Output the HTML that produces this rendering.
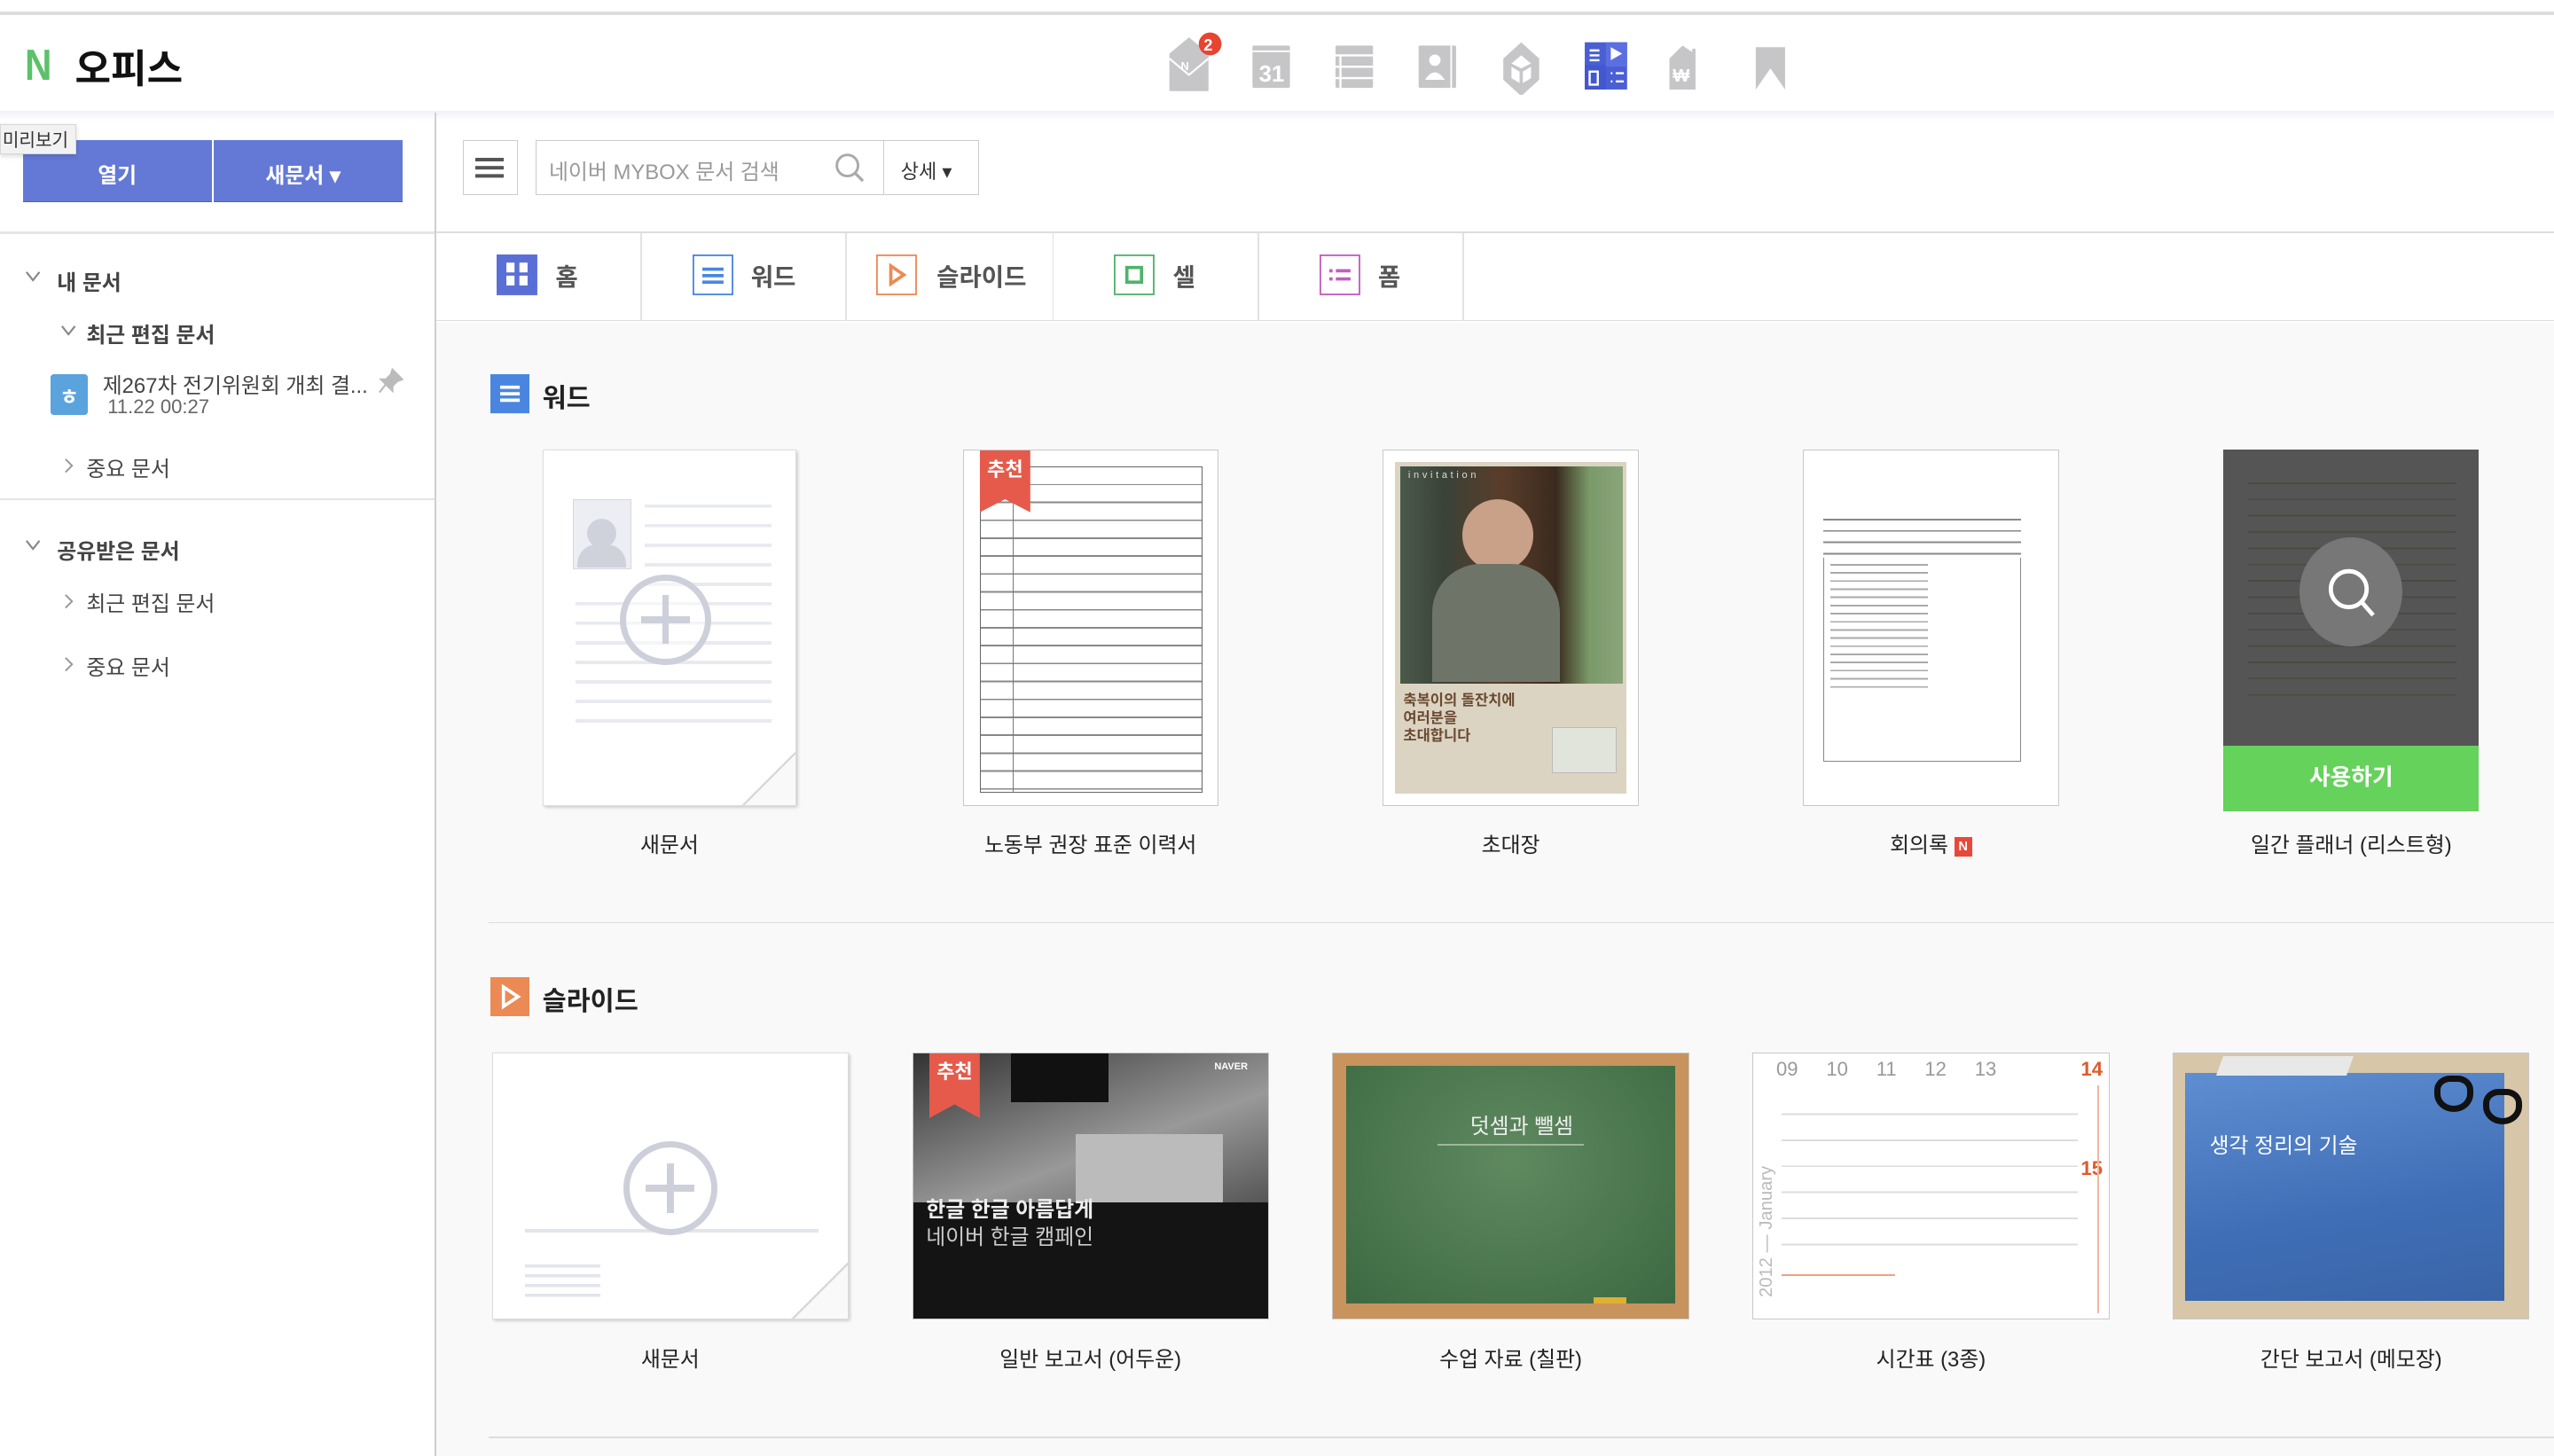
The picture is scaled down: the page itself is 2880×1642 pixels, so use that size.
<!DOCTYPE html>
<html><head><meta charset="utf-8">
<style>
*{margin:0;padding:0;box-sizing:border-box}
html,body{width:2880px;height:1642px;overflow:hidden;background:#fff}
#r{position:absolute;left:0;top:0;width:1568px;height:894px;zoom:1.83673;font-family:"Liberation Sans","Noto Sans CJK KR",sans-serif;color:#333;background:#fff;overflow:hidden}
.a{position:absolute}
.t{position:absolute;white-space:nowrap}
.card{position:absolute;background:#fff;border:1px solid #c8c8c8;overflow:hidden}
.lbl{position:absolute;font-size:13px;color:#222;text-align:center;white-space:nowrap}
.badge{position:absolute;background:#e55a4b;color:#fff;font-size:12px;font-weight:bold;text-align:center;padding-top:4px}
.chev{position:absolute;font-size:10px;color:#888}
</style></head><body><div id="r">
<div class="a" style="left:0;top:7px;width:1568px;height:2px;background:#ddd"></div>
<div class="a" style="left:0;top:68px;width:1568px;height:6px;background:linear-gradient(#eef0f4,#fff)"></div>
<div class="t" style="left:15px;top:24px;font-size:27px;font-weight:bold;color:#5cc16a;transform:scaleX(.85);transform-origin:left">N</div>
<div class="t" style="left:46px;top:23px;font-size:24px;font-weight:bold;color:#111">오피스</div>
<svg class="a" style="left:716px;top:18px" width="390" height="40" viewBox="0 0 390 40">
 <g fill="#c6c6c8">
  <path d="M2 15 L14 5 L26 15 V38 H2 Z"/>
  <path d="M2 18 L14 28 L26 18" stroke="#fff" stroke-width="1.2" fill="none"/>
  <text x="9" y="25" font-size="7" fill="#fff" font-family="Liberation Sans" font-weight="bold">N</text>
  <rect x="53" y="10" width="23" height="26" rx="1"/>
  <rect x="53" y="13" width="23" height="1" fill="#fff"/>
  <text x="57" y="32" font-size="14" fill="#fff" font-family="Liberation Sans" font-weight="bold">31</text>
  <rect x="104" y="10" width="23" height="26" rx="1"/>
  <path d="M104 16H127M104 23H127M104 30H127M107 16V36" stroke="#fff" stroke-width="1.3"/>
  <rect x="155" y="10" width="23" height="26" rx="1"/>
  <circle cx="165" cy="19" r="3.5" fill="#fff"/><path d="M159 31 Q165 22 171 31 Z" fill="#fff"/>
  <path d="M175 10V36" stroke="#fff" stroke-width="1"/>
  <path d="M218 8 L229 18 V31 L218 41 L207 31 V18 Z" />
  <path d="M212 21 L218 24 L224 21 L218 16Z M212 23V30L217 33V26Z M224 23V30L219 33V26Z" fill="#fff"/>
  <path d="M309 18 L317 10 L323 14 V12 H325 V37 H309 Z"/>
  <text x="311" y="32" font-size="11" fill="#fff" font-family="Liberation Sans" font-weight="bold">₩</text>
  <path d="M362 11 H380 V37 L371 24 L362 37 Z"/>
 </g>
 <rect x="257" y="8" width="26" height="29" fill="#4a5fd4"/>
 <rect x="270" y="8" width="13" height="15" fill="#5b6fe0"/>
 <rect x="257" y="22" width="13" height="15" fill="#4258cf"/>
 <path d="M260 13h6M260 16h6M260 19h6" stroke="#fff" stroke-width="1.3"/>
 <path d="M273 11 L280 15 L273 19Z" fill="#fff"/>
 <rect x="260" y="26" width="5" height="8" fill="none" stroke="#fff" stroke-width="1.3"/>
 <path d="M273 27h1M276 27h5M273 32h1M276 32h5" stroke="#fff" stroke-width="1.3"/>
 <circle cx="27" cy="9" r="7" fill="#e84432"/>
 <text x="23" y="13" font-size="10" fill="#fff" font-family="Liberation Sans" font-weight="bold">2</text>
</svg>
<div class="a" style="left:267px;top:69px;width:1px;height:825px;background:#cfcfcf"></div>
<div class="a" style="left:14px;top:86px;width:116px;height:38px;background:#6479d6;border-bottom:1px solid #4f62b8"></div>
<div class="a" style="left:131px;top:86px;width:116px;height:38px;background:#6479d6;border-bottom:1px solid #4f62b8"></div>
<div class="t" style="left:60px;top:97px;color:#fff;font-size:13px;font-weight:bold">열기</div>
<div class="t" style="left:163px;top:97px;color:#fff;font-size:13px;font-weight:bold">새문서 ▾</div>
<div class="a" style="left:0;top:76px;width:47px;height:19px;background:#f2f2f2;border:1px solid #d6d6d6;font-size:11px;padding:1px 0 0 1px;color:#333;box-shadow:0 1px 3px rgba(0,0,0,.15)">미리보기</div>
<div class="a" style="left:0;top:142px;width:267px;height:2px;background:#e4e4e4"></div>
<svg class="a" style="left:15px;top:166px" width="10" height="8"><path d="M1 1 L5 6 L9 1" stroke="#888" stroke-width="1.2" fill="none"/></svg>
<div class="t" style="left:35px;top:163px;font-size:13px;font-weight:bold;color:#444">내 문서</div>
<svg class="a" style="left:37px;top:199px" width="10" height="8"><path d="M1 1 L5 6 L9 1" stroke="#888" stroke-width="1.2" fill="none"/></svg>
<div class="t" style="left:53px;top:195px;font-size:13px;font-weight:bold;color:#444">최근 편집 문서</div>
<div class="a" style="left:31px;top:230px;width:23px;height:25px;background:#5aa3dc;border-radius:2px;color:#fff;font-size:13px;text-align:center;padding-top:3px;font-weight:bold">ㅎ</div>
<div class="t" style="left:63px;top:226px;font-size:13px;color:#444">제267차 전기위원회 개최 결...</div>
<div class="t" style="left:66px;top:243px;font-size:12px;color:#666">11.22 00:27</div>
<svg class="a" style="left:232px;top:226px" width="16" height="16"><path d="M9 1 L15 7 L12 8 L9 11 L9 14 L2 7 L5 7 L8 4 Z M5 10 L1 15" fill="#bbb" stroke="#bbb" stroke-width="1.2"/></svg>
<svg class="a" style="left:39px;top:281px" width="7" height="10"><path d="M1 1 L5 5 L1 9" stroke="#999" stroke-width="1.1" fill="none"/></svg>
<div class="t" style="left:53px;top:277px;font-size:13px;color:#444">중요 문서</div>
<div class="a" style="left:0;top:306px;width:267px;height:1px;background:#e4e4e4"></div>
<svg class="a" style="left:15px;top:331px" width="10" height="8"><path d="M1 1 L5 6 L9 1" stroke="#888" stroke-width="1.2" fill="none"/></svg>
<div class="t" style="left:35px;top:328px;font-size:13px;font-weight:bold;color:#444">공유받은 문서</div>
<svg class="a" style="left:39px;top:364px" width="7" height="10"><path d="M1 1 L5 5 L1 9" stroke="#999" stroke-width="1.1" fill="none"/></svg>
<div class="t" style="left:53px;top:360px;font-size:13px;color:#444">최근 편집 문서</div>
<svg class="a" style="left:39px;top:403px" width="7" height="10"><path d="M1 1 L5 5 L1 9" stroke="#999" stroke-width="1.1" fill="none"/></svg>
<div class="t" style="left:53px;top:399px;font-size:13px;color:#444">중요 문서</div>
<div class="a" style="left:284px;top:86px;width:34px;height:34px;border:1px solid #ccc"></div>
<div class="a" style="left:292px;top:97px;width:17px;height:2px;background:#555;box-shadow:0 5px 0 #555,0 10px 0 #555"></div>
<div class="a" style="left:329px;top:86px;width:272px;height:34px;border:1px solid #ccc"></div>
<div class="a" style="left:542px;top:86px;width:1px;height:34px;background:#ccc"></div>
<div class="t" style="left:337px;top:95px;font-size:13px;color:#999">네이버 MYBOX 문서 검색</div>
<svg class="a" style="left:512px;top:93px" width="20" height="20"><circle cx="8.5" cy="8.5" r="6.5" stroke="#aaa" stroke-width="1.6" fill="none"/><path d="M13 13 L18 18" stroke="#aaa" stroke-width="1.8"/></svg>
<div class="t" style="left:553px;top:96px;font-size:12px;color:#333">상세 ▾</div>
<div class="a" style="left:268px;top:142px;width:1300px;height:1px;background:#ddd"></div>
<div class="a" style="left:268px;top:143px;width:1300px;height:54px;background:#fff;border-bottom:1px solid #ddd"></div>
<div class="a" style="left:268px;top:198px;width:1300px;height:696px;background:#f9f9f9"></div>
<div class="a" style="left:393px;top:143px;width:1px;height:54px;background:#e2e2e2"></div>
<div class="a" style="left:519px;top:143px;width:1px;height:54px;background:#e2e2e2"></div>
<div class="a" style="left:646px;top:143px;width:1px;height:54px;background:#e2e2e2"></div>
<div class="a" style="left:772px;top:143px;width:1px;height:54px;background:#e2e2e2"></div>
<div class="a" style="left:898px;top:143px;width:1px;height:54px;background:#e2e2e2"></div>
<svg class="a" style="left:305px;top:156px" width="26" height="26"><rect width="25" height="25" fill="#5a6fd6"/><rect x="6" y="5" width="5" height="6" fill="#fff"/><rect x="14" y="5" width="5" height="6" fill="#fff"/><rect x="6" y="13" width="5" height="6" fill="#fff"/><rect x="14" y="13" width="5" height="6" fill="#fff"/></svg>
<div class="t" style="left:341px;top:158px;font-size:15px;font-weight:bold;color:#555">홈</div>
<svg class="a" style="left:425px;top:156px" width="26" height="26"><rect x=".5" y=".5" width="24" height="24" fill="#fff" stroke="#4a86e0"/><path d="M6 9h13M6 13h13M6 17h13" stroke="#4a86e0" stroke-width="2"/></svg>
<div class="t" style="left:461px;top:158px;font-size:15px;font-weight:bold;color:#555">워드</div>
<svg class="a" style="left:538px;top:156px" width="26" height="26"><rect x=".5" y=".5" width="24" height="24" fill="#fff" stroke="#ec8a55"/><path d="M9 7 L17 12.5 L9 18Z" fill="none" stroke="#ec8a55" stroke-width="2"/></svg>
<div class="t" style="left:575px;top:158px;font-size:15px;font-weight:bold;color:#555">슬라이드</div>
<svg class="a" style="left:684px;top:156px" width="26" height="26"><rect x=".5" y=".5" width="24" height="24" fill="#fff" stroke="#4fb36b"/><rect x="8" y="8" width="9" height="9" fill="none" stroke="#4fb36b" stroke-width="2"/></svg>
<div class="t" style="left:720px;top:158px;font-size:15px;font-weight:bold;color:#555">셀</div>
<svg class="a" style="left:810px;top:156px" width="26" height="26"><rect x=".5" y=".5" width="24" height="24" fill="#fff" stroke="#c05ec0"/><path d="M6 10h2M10 10h9M6 15h2M10 15h9" stroke="#c05ec0" stroke-width="2"/></svg>
<div class="t" style="left:846px;top:158px;font-size:15px;font-weight:bold;color:#555">폼</div>
<svg class="a" style="left:301px;top:230px" width="24" height="24"><rect width="24" height="24" fill="#4a86e0"/><path d="M6 8h12M6 12h12M6 16h12" stroke="#fff" stroke-width="2"/></svg>
<div class="t" style="left:333px;top:232px;font-size:16px;font-weight:bold;color:#222">워드</div>

<div class="card" style="left:333px;top:276px;width:156px;height:219px;border-color:#ddd;box-shadow:1px 1px 2px rgba(0,0,0,.2)">
 <div class="a" style="left:18px;top:30px;width:36px;height:43px;background:#eceef3;border:1px solid #d5d8e0"></div>
 <div class="a" style="left:27px;top:42px;width:18px;height:18px;border-radius:50%;background:#cfd2db"></div>
 <div class="a" style="left:21px;top:58px;width:30px;height:14px;border-radius:12px 12px 0 0;background:#cfd2db"></div>
 <div class="a" style="left:62px;top:33px;width:78px;height:60px;background:repeating-linear-gradient(#e8eaf0 0 2px,transparent 2px 12px)"></div>
 <div class="a" style="left:20px;top:93px;width:120px;height:82px;background:repeating-linear-gradient(#e8eaf0 0 2px,transparent 2px 12px)"></div>
 <div class="a" style="left:47px;top:76px;width:56px;height:56px;border-radius:50%;border:4px solid #cdd0da;background:rgba(255,255,255,.5)"></div>
 <div class="a" style="left:60px;top:102px;width:30px;height:4px;background:#cdd0da"></div>
 <div class="a" style="left:73px;top:89px;width:4px;height:30px;background:#cdd0da"></div>
 <div class="a" style="left:122px;top:184px;width:34px;height:35px;background:linear-gradient(135deg,transparent 48%,#ccc 50%,#f9f9f9 52%)"></div>
</div>
<div class="lbl" style="left:333px;top:508px;width:156px">새문서</div>

<div class="card" style="left:591px;top:276px;width:157px;height:219px">
 <div class="a" style="left:10px;top:10px;width:137px;height:200px;border:1px solid #666;background:repeating-linear-gradient(#fff 0 10px,#888 10px 11px)"></div>
 <div class="a" style="left:30px;top:10px;width:1px;height:200px;background:#777"></div>
 <div class="a" style="left:30px;top:12px;width:116px;height:9px;background:#fff"></div>
 <div class="badge" style="left:10px;top:-2px;width:31px;height:40px;clip-path:polygon(0 0,100% 0,100% 100%,50% 80%,0 100%)">추천</div>
</div>
<div class="lbl" style="left:591px;top:508px;width:157px">노동부 권장 표준 이력서</div>

<div class="card" style="left:849px;top:276px;width:157px;height:219px">
 <div class="a" style="left:7px;top:7px;width:142px;height:204px;background:#dcd4c2"></div>
 <div class="a" style="left:10px;top:10px;width:137px;height:133px;background:linear-gradient(90deg,#4a5a4a 0,#3a4238 20%,#5a3d2a 45%,#3a2a1e 70%,#7a9a6a 85%,#8aa57a 100%)"></div>
 <div class="a" style="left:48px;top:30px;width:44px;height:44px;border-radius:50%;background:#c9a088"></div>
 <div class="a" style="left:30px;top:70px;width:78px;height:72px;border-radius:30px 30px 0 0;background:#6f7468"></div>
 <div class="t" style="left:15px;top:12px;font-size:6px;color:#ddd;letter-spacing:2px">invitation</div>
 <div class="t" style="left:12px;top:148px;font-size:9px;font-weight:bold;color:#6b4a33;line-height:11px">축복이의 돌잔치에<br>여러분을<br>초대합니다</div>
 <div class="a" style="left:103px;top:170px;width:40px;height:28px;background:#e0e4da;border:1px solid #bbb"></div>
</div>
<div class="lbl" style="left:849px;top:508px;width:157px">초대장</div>

<div class="card" style="left:1107px;top:276px;width:157px;height:219px">
 <div class="a" style="left:12px;top:36px;width:121px;height:155px;border:1px solid #888"></div>
 <div class="a" style="left:12px;top:36px;width:121px;height:30px;background:repeating-linear-gradient(#fff 0 6px,#888 6px 7px)"></div>
 <div class="a" style="left:16px;top:70px;width:60px;height:80px;background:repeating-linear-gradient(#aaa 0 1px,transparent 1px 5px)"></div>
</div>
<div class="lbl" style="left:1107px;top:508px;width:157px">회의록 <span style="display:inline-block;background:#e8483a;color:#fff;font-size:8px;font-weight:bold;width:11px;height:12px;line-height:12px;vertical-align:1px">N</span></div>

<div class="a" style="left:1365px;top:276px;width:157px;height:222px;background:#555;overflow:hidden">
 <div class="a" style="left:15px;top:20px;width:128px;height:140px;background:repeating-linear-gradient(#4a4a3e 0 1px,transparent 1px 10px)"></div>
 <div class="a" style="left:47px;top:54px;width:63px;height:67px;border-radius:50%;background:#777"></div>
 <svg class="a" style="left:62px;top:70px" width="40" height="40"><circle cx="15" cy="16" r="11" stroke="#fff" stroke-width="2.6" fill="none"/><path d="M23 24 L30 32" stroke="#fff" stroke-width="2.6"/></svg>
 <div class="a" style="left:0;top:182px;width:157px;height:40px;background:#64d25b;color:#fff;font-size:14px;font-weight:bold;text-align:center;line-height:40px">사용하기</div>
</div>
<div class="lbl" style="left:1365px;top:508px;width:157px">일간 플래너 (리스트형)</div>

<div class="a" style="left:300px;top:566px;width:1268px;height:1px;background:#ddd"></div>

<svg class="a" style="left:301px;top:600px" width="24" height="24"><rect width="24" height="24" fill="#ec8a55"/><path d="M8 6 L17 12 L8 18Z" fill="none" stroke="#fff" stroke-width="2"/></svg>
<div class="t" style="left:333px;top:602px;font-size:16px;font-weight:bold;color:#222">슬라이드</div>

<div class="card" style="left:302px;top:646px;width:219px;height:164px;border-color:#ddd;box-shadow:1px 1px 2px rgba(0,0,0,.2)">
 <div class="a" style="left:20px;top:108px;width:180px;height:2px;background:#e3e5ec"></div>
 <div class="a" style="left:20px;top:130px;width:46px;height:20px;background:repeating-linear-gradient(#e3e5ec 0 2px,transparent 2px 6px)"></div>
 <div class="a" style="left:80px;top:54px;width:58px;height:58px;border-radius:50%;border:4px solid #cdd0da;background:#fff"></div>
 <div class="a" style="left:94px;top:81px;width:30px;height:4px;background:#cdd0da"></div>
 <div class="a" style="left:107px;top:68px;width:4px;height:30px;background:#cdd0da"></div>
 <div class="a" style="left:183px;top:128px;width:36px;height:36px;background:linear-gradient(135deg,transparent 48%,#ccc 50%,#f9f9f9 52%)"></div>
</div>
<div class="lbl" style="left:302px;top:824px;width:219px">새문서</div>

<div class="card" style="left:560px;top:646px;width:219px;height:164px">
 <div class="a" style="left:0;top:0;width:219px;height:92px;background:linear-gradient(160deg,#333,#777 40%,#999 60%,#555)"></div>
 <div class="a" style="left:60px;top:0;width:60px;height:30px;background:#111"></div>
 <div class="a" style="left:100px;top:50px;width:90px;height:42px;background:#bbb"></div>
 <div class="a" style="left:0;top:92px;width:219px;height:72px;background:#141414"></div>
 <div class="t" style="left:8px;top:88px;font-size:13px;font-weight:bold;color:#eee;line-height:17px">한글 한글 아름답게<br><span style="font-weight:normal;color:#ccc">네이버 한글 캠페인</span></div>
 <div class="t" style="left:185px;top:5px;font-size:6px;font-weight:bold;color:#fff">NAVER</div>
 <div class="badge" style="left:10px;top:-2px;width:31px;height:42px;clip-path:polygon(0 0,100% 0,100% 100%,50% 80%,0 100%)">추천</div>
</div>
<div class="lbl" style="left:560px;top:824px;width:219px">일반 보고서 (어두운)</div>

<div class="card" style="left:818px;top:646px;width:219px;height:164px;background:#c8935d">
 <div class="a" style="left:8px;top:8px;width:202px;height:146px;background:radial-gradient(ellipse at 50% 40%,#5f8a60,#3d6942)"></div>
 <div class="t" style="left:84px;top:34px;font-size:13px;color:#eee">덧셈과 뺄셈</div>
 <div class="a" style="left:64px;top:56px;width:90px;height:1px;background:#9cb89c"></div>
 <div class="a" style="left:160px;top:150px;width:20px;height:4px;background:#e0b030"></div>
</div>
<div class="lbl" style="left:818px;top:824px;width:219px">수업 자료 (칠판)</div>

<div class="card" style="left:1076px;top:646px;width:219px;height:164px">
 <div class="t" style="left:14px;top:3px;font-size:12px;color:#999;word-spacing:14px">09 10 11 12 13</div>
 <div class="t" style="left:201px;top:3px;font-size:12px;font-weight:bold;color:#e05a2a">14</div>
 <div class="t" style="left:201px;top:64px;font-size:12px;font-weight:bold;color:#e05a2a">15</div>
 <div class="a" style="left:17px;top:22px;width:182px;height:110px;background:repeating-linear-gradient(transparent 0 15px,#ddd 15px 16px)"></div>
 <div class="a" style="left:211px;top:20px;width:1px;height:140px;background:#f0b8a0"></div>
 <div class="t" style="left:2px;top:150px;font-size:11px;color:#bbb;transform:rotate(-90deg);transform-origin:left top">2012 — January</div>
 <div class="a" style="left:17px;top:136px;width:70px;height:1px;background:#f4a080"></div>
</div>
<div class="lbl" style="left:1076px;top:824px;width:219px">시간표 (3종)</div>

<div class="card" style="left:1334px;top:646px;width:219px;height:164px;background:#d8c6a8">
 <div class="a" style="left:7px;top:12px;width:196px;height:140px;background:linear-gradient(170deg,#5f8ed2,#3f6eb6 60%,#3a64a8)"></div>
 <div class="a" style="left:28px;top:2px;width:80px;height:12px;background:#e8e8e8;transform:skewX(-20deg)"></div>
 <div class="a" style="left:160px;top:14px;width:24px;height:22px;border:4px solid #111;border-radius:40% 40% 50% 50%"></div>
 <div class="a" style="left:190px;top:22px;width:24px;height:22px;border:4px solid #111;border-radius:40% 40% 50% 50%"></div>
 <div class="t" style="left:22px;top:46px;font-size:13px;color:#fff">생각 정리의 기술</div>
</div>
<div class="lbl" style="left:1334px;top:824px;width:219px">간단 보고서 (메모장)</div>

<div class="a" style="left:300px;top:882px;width:1268px;height:1px;background:#ddd"></div>
</div></body></html>
